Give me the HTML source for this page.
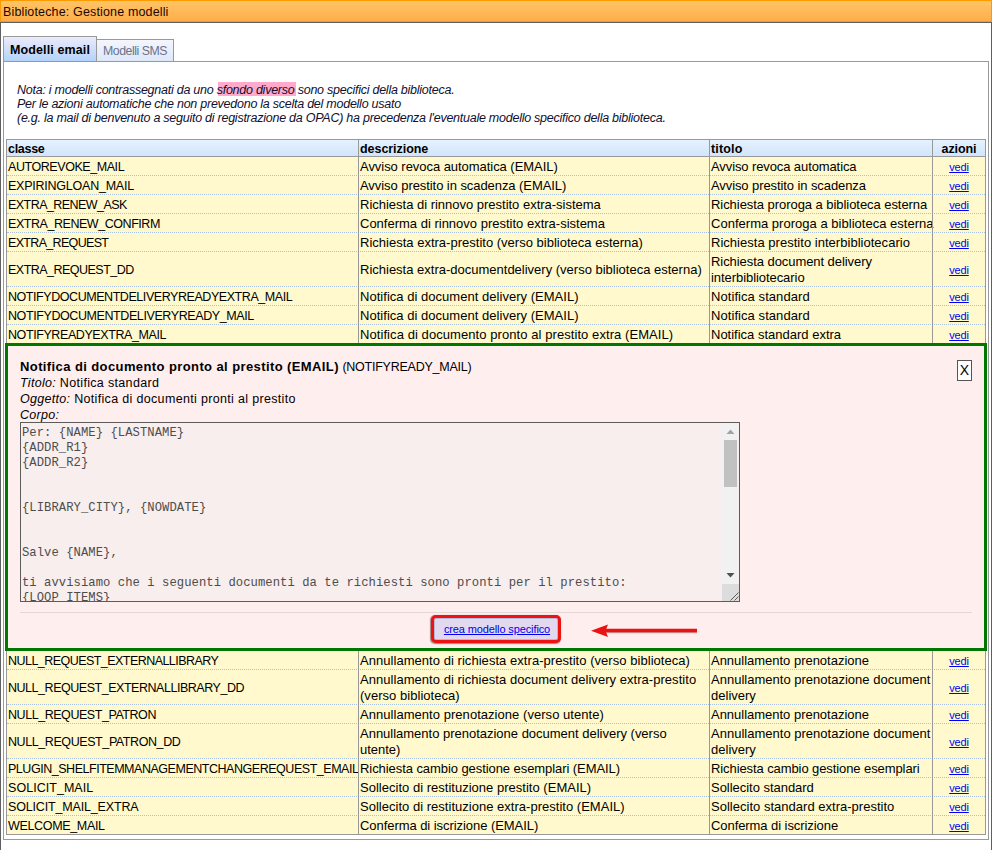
<!DOCTYPE html>
<html><head><meta charset="utf-8">
<style>
*{box-sizing:border-box}
html,body{margin:0;padding:0}
body{width:993px;height:850px;position:relative;overflow:hidden;background:#fff;font-family:"Liberation Sans",sans-serif;font-size:12.5px;color:#000}
.a{position:absolute}
#hdr{left:0;top:0;width:992px;height:22px;border:1px solid #ff9900;background:linear-gradient(#ffc466,#ffae4a);color:#1a0800;font-size:12.5px;letter-spacing:0.15px;line-height:20px;padding-top:1px;padding-left:2px;white-space:nowrap}
#outer{left:0;top:22px;width:992px;height:900px;border:1px solid #5f5f5f}
#tab1{left:3px;top:36px;width:94px;height:25px;border:1px solid #999;border-bottom:none;background:linear-gradient(#ecebfa,#b3d3fb);font-weight:bold;font-size:12.5px;letter-spacing:0.12px;line-height:24px;padding-top:1px;padding-left:6px;white-space:nowrap}
#tab2{left:96px;top:39px;width:78px;height:22px;border:1px solid #999;border-bottom:none;background:linear-gradient(#f5f5fd,#dce8fa);color:#6b7389;font-size:12.3px;letter-spacing:-0.45px;line-height:20px;padding-top:1px;padding-left:6px;white-space:nowrap}
#panel{left:3px;top:61px;width:986px;height:779px;border:1px solid #999}
#note{left:17px;top:83px;font-style:italic;font-size:12.5px;letter-spacing:-0.25px;line-height:14px;color:#101030;white-space:nowrap}
#note .hl{}
#hlbox{left:218px;top:82px;width:78px;height:14px;background:#ffaacc}
#tbl{left:6px;top:139px;width:980px;height:696px;border:1px solid #999;background:#fff9cd}
.hrow{position:absolute;left:0;top:0;width:978px;height:17px;background:linear-gradient(#e5f1fe,#d3e5fb);border-bottom:1px solid #999}
.row{position:absolute;left:0;width:978px;border-bottom:1px dotted #a9c1dc}
.c{position:absolute;top:0;white-space:nowrap;line-height:16px}
.vl{position:absolute;top:0;width:1px;height:694px;background:#999}
.cls{left:1px;font-size:12.5px;letter-spacing:-0.45px}
.dsc{left:353px;font-size:13px;letter-spacing:0.03px}
.tit{left:704px;font-size:13px;letter-spacing:0px}
.act{left:926px;width:52px;text-align:center}
.act a{color:#0000ee;text-decoration:underline;font-size:11px;letter-spacing:-0.15px}
.hrow .c{font-weight:bold;top:1px}
#green{left:5px;top:343px;width:982px;height:308px;border:3px solid #007700;background:#ffeeee}
#gtitle{left:20px;top:359px;white-space:nowrap;line-height:16px}
#gtitle b{font-size:13px;letter-spacing:0.4px}
#gtitle span{letter-spacing:-0.24px}
.gl{position:absolute;left:20px;white-space:nowrap;line-height:16px;letter-spacing:0.33px}
.gl i{letter-spacing:0.3px}
#xbtn{left:957px;top:360px;width:15px;height:21px;border:1px solid #555;background:#fff;font-size:14px;line-height:19px;text-align:center;color:#000}
#ta{left:20px;top:422px;width:720px;height:180px;border:1px solid #5c5c5c;background:#f8eeee;overflow:hidden}
#ta pre{margin:0;position:absolute;left:1px;top:3px;font-family:"Liberation Mono",monospace;font-size:12.2px;letter-spacing:0.06px;line-height:15px;color:#4d4d4d}
#sb{left:701px;top:0;width:17px;height:178px;background:#f1f1f1}
#thumb{left:703px;top:17px;width:13px;height:47px;background:#c1c1c1}
#corner{left:701px;top:161px;width:17px;height:17px;background:#dcdcdc}
#sep{left:20px;top:612px;width:952px;height:1px;background:#e6d6d6}
#btnred{left:431px;top:615px;width:130px;height:28px;border:3px solid #ee1313;border-radius:5px;background:#e2d9f0;box-shadow:-0.5px 0.8px 1px rgba(60,0,0,0.45),inset 0 0 0 1px rgba(110,120,170,0.35)}
#btntxt{left:432px;top:615px;width:130px;height:28px;text-align:center;line-height:28px;font-size:11px;letter-spacing:-0.12px;white-space:nowrap}
#btntxt a{color:#0000ee;text-decoration:underline}
</style></head><body>
<div id="hdr" class="a">Biblioteche: Gestione modelli</div>
<div id="outer" class="a"></div>
<div id="panel" class="a"></div>
<div id="tab2" class="a">Modelli SMS</div>
<div id="tab1" class="a">Modelli email</div>
<div id="hlbox" class="a"></div>
<div id="note" class="a">Nota: i modelli contrassegnati da uno <span class="hl">sfondo diverso</span> sono specifici della biblioteca.<br>Per le azioni automatiche che non prevedono la scelta del modello usato<br>(e.g. la mail di benvenuto a seguito di registrazione da OPAC) ha precedenza l'eventuale modello specifico della biblioteca.</div>

<div id="tbl" class="a">
<div class="hrow"><div class="c cls" style="letter-spacing:-0.3px;font-size:12.5px">classe</div><div class="c dsc" style="letter-spacing:-0.05px;font-size:12.5px">descrizione</div><div class="c tit" style="letter-spacing:0.15px;font-size:12.5px">titolo</div><div class="c act" style="letter-spacing:-0.1px">azioni</div></div>
<div class="row" style="top:17px;height:19px;"><div class="c cls" style="top:2px;letter-spacing:-0.437px">AUTOREVOKE_MAIL</div><div class="c dsc" style="top:2px;letter-spacing:-0.046px">Avviso revoca automatica (EMAIL)</div><div class="c tit" style="top:2px;letter-spacing:-0.102px">Avviso revoca automatica</div><div class="c act" style="top:2px"><a href="#">vedi</a></div></div>
<div class="row" style="top:36px;height:19px;"><div class="c cls" style="top:2px;letter-spacing:-0.237px">EXPIRINGLOAN_MAIL</div><div class="c dsc" style="top:2px;letter-spacing:-0.065px">Avviso prestito in scadenza (EMAIL)</div><div class="c tit" style="top:2px;letter-spacing:-0.090px">Avviso prestito in scadenza</div><div class="c act" style="top:2px"><a href="#">vedi</a></div></div>
<div class="row" style="top:55px;height:19px;"><div class="c cls" style="top:2px;letter-spacing:-0.552px">EXTRA_RENEW_ASK</div><div class="c dsc" style="top:2px;letter-spacing:-0.012px">Richiesta di rinnovo prestito extra-sistema</div><div class="c tit" style="top:2px;letter-spacing:-0.053px">Richiesta proroga a biblioteca esterna</div><div class="c act" style="top:2px"><a href="#">vedi</a></div></div>
<div class="row" style="top:74px;height:19px;"><div class="c cls" style="top:2px;letter-spacing:-0.450px">EXTRA_RENEW_CONFIRM</div><div class="c dsc" style="top:2px;letter-spacing:-0.000px">Conferma di rinnovo prestito extra-sistema</div><div class="c tit" style="top:2px;letter-spacing:0.020px">Conferma proroga a biblioteca esterna</div><div class="c act" style="top:2px"><a href="#">vedi</a></div></div>
<div class="row" style="top:93px;height:19px;"><div class="c cls" style="top:2px;letter-spacing:-0.675px">EXTRA_REQUEST</div><div class="c dsc" style="top:2px;letter-spacing:0.008px">Richiesta extra-prestito (verso biblioteca esterna)</div><div class="c tit" style="top:2px;letter-spacing:0.025px">Richiesta prestito interbibliotecario</div><div class="c act" style="top:2px"><a href="#">vedi</a></div></div>
<div class="row" style="top:112px;height:35px;"><div class="c cls" style="top:10px;letter-spacing:-0.522px">EXTRA_REQUEST_DD</div><div class="c dsc" style="top:10px;letter-spacing:-0.001px">Richiesta extra-documentdelivery (verso biblioteca esterna)</div><div class="c tit" style="top:2px;letter-spacing:-0.062px">Richiesta document delivery<br>interbibliotecario</div><div class="c act" style="top:10px"><a href="#">vedi</a></div></div>
<div class="row" style="top:147px;height:19px;"><div class="c cls" style="top:2px;letter-spacing:-0.441px">NOTIFYDOCUMENTDELIVERYREADYEXTRA_MAIL</div><div class="c dsc" style="top:2px;letter-spacing:0.030px">Notifica di document delivery (EMAIL)</div><div class="c tit" style="top:2px;letter-spacing:0.068px">Notifica standard</div><div class="c act" style="top:2px"><a href="#">vedi</a></div></div>
<div class="row" style="top:166px;height:19px;"><div class="c cls" style="top:2px;letter-spacing:-0.409px">NOTIFYDOCUMENTDELIVERYREADY_MAIL</div><div class="c dsc" style="top:2px;letter-spacing:0.030px">Notifica di document delivery (EMAIL)</div><div class="c tit" style="top:2px;letter-spacing:0.068px">Notifica standard</div><div class="c act" style="top:2px"><a href="#">vedi</a></div></div>
<div class="row" style="top:185px;height:19px;"><div class="c cls" style="top:2px;letter-spacing:-0.414px">NOTIFYREADYEXTRA_MAIL</div><div class="c dsc" style="top:2px;letter-spacing:0.074px">Notifica di documento pronto al prestito extra (EMAIL)</div><div class="c tit" style="top:2px;letter-spacing:0.000px">Notifica standard extra</div><div class="c act" style="top:2px"><a href="#">vedi</a></div></div>
<div class="row" style="top:511px;height:19px;"><div class="c cls" style="top:2px;letter-spacing:-0.543px">NULL_REQUEST_EXTERNALLIBRARY</div><div class="c dsc" style="top:2px;letter-spacing:0.045px">Annullamento di richiesta extra-prestito (verso biblioteca)</div><div class="c tit" style="top:2px;letter-spacing:-0.015px">Annullamento prenotazione</div><div class="c act" style="top:2px"><a href="#">vedi</a></div></div>
<div class="row" style="top:530px;height:35px;"><div class="c cls" style="top:10px;letter-spacing:-0.468px">NULL_REQUEST_EXTERNALLIBRARY_DD</div><div class="c dsc" style="top:2px;letter-spacing:0.040px">Annullamento di richiesta document delivery extra-prestito<br>(verso biblioteca)</div><div class="c tit" style="top:2px;letter-spacing:0.011px">Annullamento prenotazione document<br>delivery</div><div class="c act" style="top:10px"><a href="#">vedi</a></div></div>
<div class="row" style="top:565px;height:19px;"><div class="c cls" style="top:2px;letter-spacing:-0.450px">NULL_REQUEST_PATRON</div><div class="c dsc" style="top:2px;letter-spacing:0.044px">Annullamento prenotazione (verso utente)</div><div class="c tit" style="top:2px;letter-spacing:-0.015px">Annullamento prenotazione</div><div class="c act" style="top:2px"><a href="#">vedi</a></div></div>
<div class="row" style="top:584px;height:35px;"><div class="c cls" style="top:10px;letter-spacing:-0.416px">NULL_REQUEST_PATRON_DD</div><div class="c dsc" style="top:2px;letter-spacing:-0.010px">Annullamento prenotazione document delivery (verso<br>utente)</div><div class="c tit" style="top:2px;letter-spacing:0.011px">Annullamento prenotazione document<br>delivery</div><div class="c act" style="top:10px"><a href="#">vedi</a></div></div>
<div class="row" style="top:619px;height:19px;"><div class="c cls" style="top:2px;letter-spacing:-0.470px">PLUGIN_SHELFITEMMANAGEMENTCHANGEREQUEST_EMAIL</div><div class="c dsc" style="top:2px;letter-spacing:-0.069px">Richiesta cambio gestione esemplari (EMAIL)</div><div class="c tit" style="top:2px;letter-spacing:-0.090px">Richiesta cambio gestione esemplari</div><div class="c act" style="top:2px"><a href="#">vedi</a></div></div>
<div class="row" style="top:638px;height:19px;"><div class="c cls" style="top:2px;letter-spacing:0.041px">SOLICIT_MAIL</div><div class="c dsc" style="top:2px;letter-spacing:0.016px">Sollecito di restituzione prestito (EMAIL)</div><div class="c tit" style="top:2px;letter-spacing:-0.031px">Sollecito standard</div><div class="c act" style="top:2px"><a href="#">vedi</a></div></div>
<div class="row" style="top:657px;height:19px;"><div class="c cls" style="top:2px;letter-spacing:-0.164px">SOLICIT_MAIL_EXTRA</div><div class="c dsc" style="top:2px;letter-spacing:0.019px">Sollecito di restituzione extra-prestito (EMAIL)</div><div class="c tit" style="top:2px;letter-spacing:0.016px">Sollecito standard extra-prestito</div><div class="c act" style="top:2px"><a href="#">vedi</a></div></div>
<div class="row" style="top:676px;height:19px;border-bottom:none;"><div class="c cls" style="top:2px;letter-spacing:-0.336px">WELCOME_MAIL</div><div class="c dsc" style="top:2px;letter-spacing:-0.057px">Conferma di iscrizione (EMAIL)</div><div class="c tit" style="top:2px;letter-spacing:-0.068px">Conferma di iscrizione</div><div class="c act" style="top:2px"><a href="#">vedi</a></div></div>
<div class="vl" style="left:351px"></div>
<div class="vl" style="left:702px"></div>
<div class="vl" style="left:925px"></div>
</div>

<div id="green" class="a"></div>
<div id="gtitle" class="a"><b>Notifica di documento pronto al prestito (EMAIL)</b> <span>(NOTIFYREADY_MAIL)</span></div>
<div class="gl" style="top:375px"><i>Titolo:</i> Notifica standard</div>
<div class="gl" style="top:391px"><i>Oggetto:</i> Notifica di documenti pronti al prestito</div>
<div class="gl" style="top:407px"><i>Corpo:</i></div>
<div id="xbtn" class="a">X</div>
<div id="ta" class="a"><pre>Per: {NAME} {LASTNAME}
{ADDR_R1}
{ADDR_R2}


{LIBRARY_CITY}, {NOWDATE}


Salve {NAME},

ti avvisiamo che i seguenti documenti da te richiesti sono pronti per il prestito:
{LOOP_ITEMS}
</pre>
<div id="sb" class="a"></div>
<div id="thumb" class="a"></div>
<div id="corner" class="a"></div>
<svg class="a" style="left:701px;top:0" width="17" height="178">
<polygon points="4.5,11 12.5,11 8.5,6.5" fill="#a3a3a3"/>
<polygon points="4.5,150 12.5,150 8.5,154.5" fill="#505050"/>
<path d="M8.5 177.5 L16.5 169.5 M12.5 177.5 L16.5 173.5" stroke="#5a5a5a" stroke-width="1"/>
</svg>
</div>
<div id="sep" class="a"></div>
<div id="btnred" class="a"></div>
<div id="btntxt" class="a"><a href="#">crea modello specifico</a></div>
<svg class="a" style="left:585px;top:618px" width="120" height="25">
<path d="M20 13.5 L112 13.5" stroke="#5a1010" stroke-opacity="0.35" stroke-width="3.5"/>
<path d="M18 12.5 L112 12.5" stroke="#ea1212" stroke-width="3.5"/>
<polygon points="6,12.7 23,6.4 20.5,12.7 23,19" fill="#ea1212"/>
</svg>
</body></html>
